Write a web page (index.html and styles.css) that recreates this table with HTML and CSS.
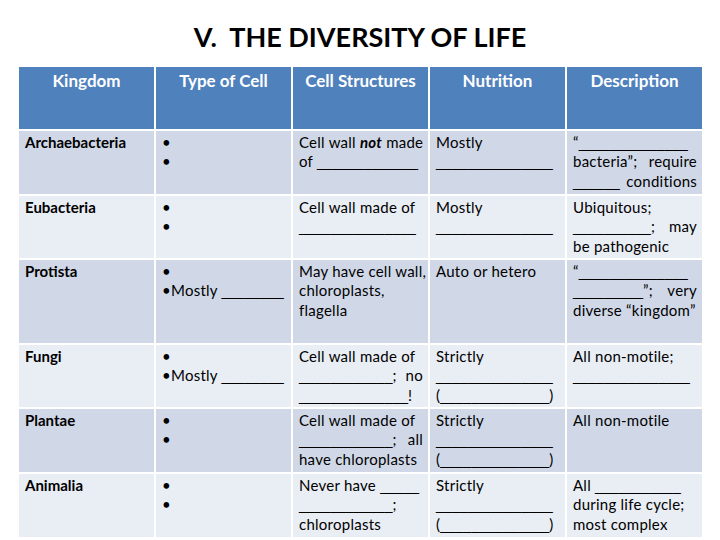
FILE: index.html
```html
<!DOCTYPE html>
<html>
<head>
<meta charset="utf-8">
<link rel="stylesheet" href="styles.css">
</head>
<body>
<div class="slide">
  <h1 class="title">V.&nbsp; THE DIVERSITY OF LIFE</h1>
  <div class="table">
    <div class="th">Kingdom</div>
    <div class="th">Type of Cell</div>
    <div class="th">Cell Structures</div>
    <div class="th">Nutrition</div>
    <div class="th">Description</div>

    <div class="td odd k">Archaebacteria</div>
    <div class="td odd"><span class="ln">•</span><span class="ln">•</span></div>
    <div class="td odd"><span class="ln jl">Cell wall <b><i>not</i></b> made</span><span class="ln">of <span class="u">_____________</span></span></div>
    <div class="td odd"><span class="ln">Mostly</span><span class="ln"><span class="u">_______________</span></span></div>
    <div class="td odd"><span class="ln">“<span class="u">______________</span></span><span class="ln jl">bacteria”; require</span><span class="ln jl"><span class="u">______</span> conditions</span></div>

    <div class="td even k">Eubacteria</div>
    <div class="td even"><span class="ln">•</span><span class="ln">•</span></div>
    <div class="td even"><span class="ln">Cell wall made of</span><span class="ln"><span class="u">_______________</span></span></div>
    <div class="td even"><span class="ln">Mostly</span><span class="ln"><span class="u">_______________</span></span></div>
    <div class="td even"><span class="ln">Ubiquitous;</span><span class="ln jl"><span class="u">__________</span>; may</span><span class="ln">be pathogenic</span></div>

    <div class="td odd k">Protista</div>
    <div class="td odd"><span class="ln">•</span><span class="ln">•Mostly <span class="u">________</span></span></div>
    <div class="td odd"><span class="ln">May have cell wall,</span><span class="ln">chloroplasts,</span><span class="ln">flagella</span></div>
    <div class="td odd"><span class="ln">Auto or hetero</span></div>
    <div class="td odd"><span class="ln">“<span class="u">______________</span></span><span class="ln jl"><span class="u">_________</span>”; very</span><span class="ln">diverse “kingdom”</span></div>

    <div class="td even k">Fungi</div>
    <div class="td even"><span class="ln">•</span><span class="ln">•Mostly <span class="u">________</span></span></div>
    <div class="td even"><span class="ln">Cell wall made of</span><span class="ln jl"><span class="u">____________</span>; no</span><span class="ln"><span class="u">______________</span>!</span></div>
    <div class="td even"><span class="ln">Strictly</span><span class="ln"><span class="u">_______________</span></span><span class="ln">(<span class="u">______________</span>)</span></div>
    <div class="td even"><span class="ln">All non-motile;</span><span class="ln"><span class="u">_______________</span></span></div>

    <div class="td odd k">Plantae</div>
    <div class="td odd"><span class="ln">•</span><span class="ln">•</span></div>
    <div class="td odd"><span class="ln">Cell wall made of</span><span class="ln jl"><span class="u">____________</span>; &nbsp;all</span><span class="ln">have chloroplasts</span></div>
    <div class="td odd"><span class="ln">Strictly</span><span class="ln"><span class="u">_______________</span></span><span class="ln">(<span class="u">______________</span>)</span></div>
    <div class="td odd"><span class="ln">All non-motile</span></div>

    <div class="td even k">Animalia</div>
    <div class="td even"><span class="ln">•</span><span class="ln">•</span></div>
    <div class="td even"><span class="ln">Never have <span class="u">_____</span></span><span class="ln"><span class="u">____________</span>;</span><span class="ln">chloroplasts</span></div>
    <div class="td even"><span class="ln">Strictly</span><span class="ln"><span class="u">_______________</span></span><span class="ln">(<span class="u">______________</span>)</span></div>
    <div class="td even"><span class="ln">All <span class="u">___________</span></span><span class="ln">during life cycle;</span><span class="ln">most complex</span></div>
  </div>
</div>
</body>
</html>
```

FILE: styles.css
```css
html, body {
  margin: 0;
  padding: 0;
  background: #ffffff;
}

.slide {
  width: 720px;
  height: 540px;
  font-family: Lato, "Open Sans", sans-serif;
  color: #000;
}

.title {
  margin: 0;
  height: 67px;
  box-sizing: border-box;
  padding-top: 20px;
  text-align: center;
  font-size: 27px;
  line-height: 34px;
  font-weight: 700;
  color: #000;
}

.table {
  margin-left: 19px;
  width: 683px;
  display: grid;
  grid-template-columns: repeat(5, 1fr);
  grid-template-rows: 62px 63px 62px 83px 62px 63px 63px;
  gap: 2px;
}

.th {
  background: #4f81bd;
  color: #fff;
  font-weight: 700;
  font-size: 17px;
  line-height: 19px;
  text-align: center;
  padding-top: 4px;
}

.td {
  font-size: 15px;
  letter-spacing: 0.25px;
  line-height: 19.4px;
  padding: 2px 5px 0 6px;
  overflow: hidden;
}

.td.k {
  font-weight: 700;
  letter-spacing: 0;
}

.odd {
  background: #d0d8e8;
}

.even {
  background: #e9edf4;
}

.ln {
  display: block;
  white-space: nowrap;
}

.ln.jl {
  text-align: justify;
  text-align-last: justify;
}

.u {
  font-family: "Liberation Sans", Arial, sans-serif;
  font-size: 14px;
  line-height: 1;
  letter-spacing: 0;
}
```
